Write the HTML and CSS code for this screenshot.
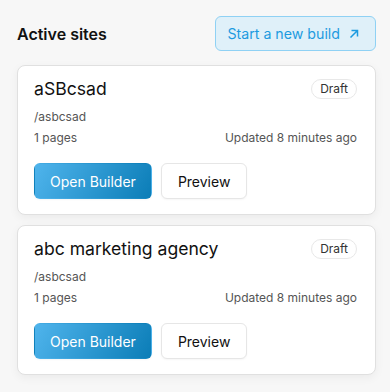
FILE: index.html
```html
<!DOCTYPE html>
<html lang="en">
  <head>
    <meta charset="UTF-8" />
    <meta name="viewport" content="width=device-width, initial-scale=1.0" />
    <title>Active sites</title>
    <link rel="stylesheet" href="styles.css">
  </head>
  <body>
    <div class="page">
      <div class="header">
        <h2 class="heading">Active sites</h2>
        <button class="new-build">
          Start a new build
          <svg class="arrow" width="10" height="10" viewBox="0 0 10 10">
            <path d="M1.5 8.5 L8.5 1.5 M2.5 1.5 H8.5 V7.5" fill="none" stroke="currentColor" stroke-width="1.5" />
          </svg>
        </button>
      </div>

      <div class="site">
        <div class="site-top">
          <div class="site-name">aSBcsad</div>
          <span class="badge">Draft</span>
        </div>
        <div class="slug">/asbcsad</div>
        <div class="meta">
          <span>1 pages</span>
          <span>Updated 8 minutes ago</span>
        </div>
        <div class="actions">
          <button class="btn primary">Open Builder</button>
          <button class="btn">Preview</button>
        </div>
      </div>

      <div class="site">
        <div class="site-top">
          <div class="site-name">abc marketing agency</div>
          <span class="badge">Draft</span>
        </div>
        <div class="slug">/asbcsad</div>
        <div class="meta">
          <span>1 pages</span>
          <span>Updated 8 minutes ago</span>
        </div>
        <div class="actions">
          <button class="btn primary">Open Builder</button>
          <button class="btn">Preview</button>
        </div>
      </div>
    </div>
  </body>
</html>
```

FILE: styles.css
```css
body {
  margin: 0;
  background-color: #f7f7f7;
  font-family: Inter, "Noto Sans", sans-serif;
  color: #111;
}

.page {
  width: 359px;
  padding: 16px 0 0 17px;
}

.header {
  display: flex;
  align-items: center;
  justify-content: space-between;
  height: 35px;
  margin-bottom: 14px;
}

.heading {
  margin: 0;
  font-size: 16px;
  font-weight: 600;
  color: #111;
}

.new-build {
  display: flex;
  align-items: center;
  gap: 9px;
  height: 35px;
  padding: 0 16px 0 11px;
  font-family: inherit;
  font-size: 14.2px;
  color: #1d9be0;
  background-color: #dff0f9;
  border: 1px solid #8fd1f4;
  border-radius: 6px;
}

.arrow {
  display: block;
}

.site {
  background-color: #fff;
  border: 1px solid #e0e0e0;
  border-radius: 8px;
  box-shadow: 0 3px 10px rgba(0, 0, 0, 0.05);
  padding: 11px 18px 15px 16px;
  margin-bottom: 10px;
}

.site-top {
  display: flex;
  align-items: center;
  justify-content: space-between;
  height: 24px;
}

.site-name {
  font-size: 17.6px;
  line-height: 24px;
  color: #111;
}

.badge {
  font-size: 12px;
  line-height: 18px;
  padding: 0 8px;
  color: #333;
  border: 1px solid #e8e8e8;
  border-radius: 10px;
}

.slug {
  margin-top: 6px;
  font-size: 12px;
  line-height: 20px;
  color: #555;
}

.meta {
  display: flex;
  justify-content: space-between;
  margin-top: 1px;
  font-size: 12px;
  line-height: 20px;
  color: #555;
}

.actions {
  display: flex;
  gap: 9px;
  margin-top: 15px;
}

.btn {
  height: 36px;
  padding: 0 16px;
  font-family: inherit;
  font-size: 14px;
  color: #111;
  background-color: #fff;
  border: 1px solid #e6e6e6;
  border-radius: 6px;
  box-shadow: 0 1px 2px rgba(0, 0, 0, 0.04);
}

.btn.primary {
  padding: 0 15px;
  color: #fff;
  border-color: transparent;
  background: linear-gradient(120deg, #4fb4ec, #0b7db7);
}
```
